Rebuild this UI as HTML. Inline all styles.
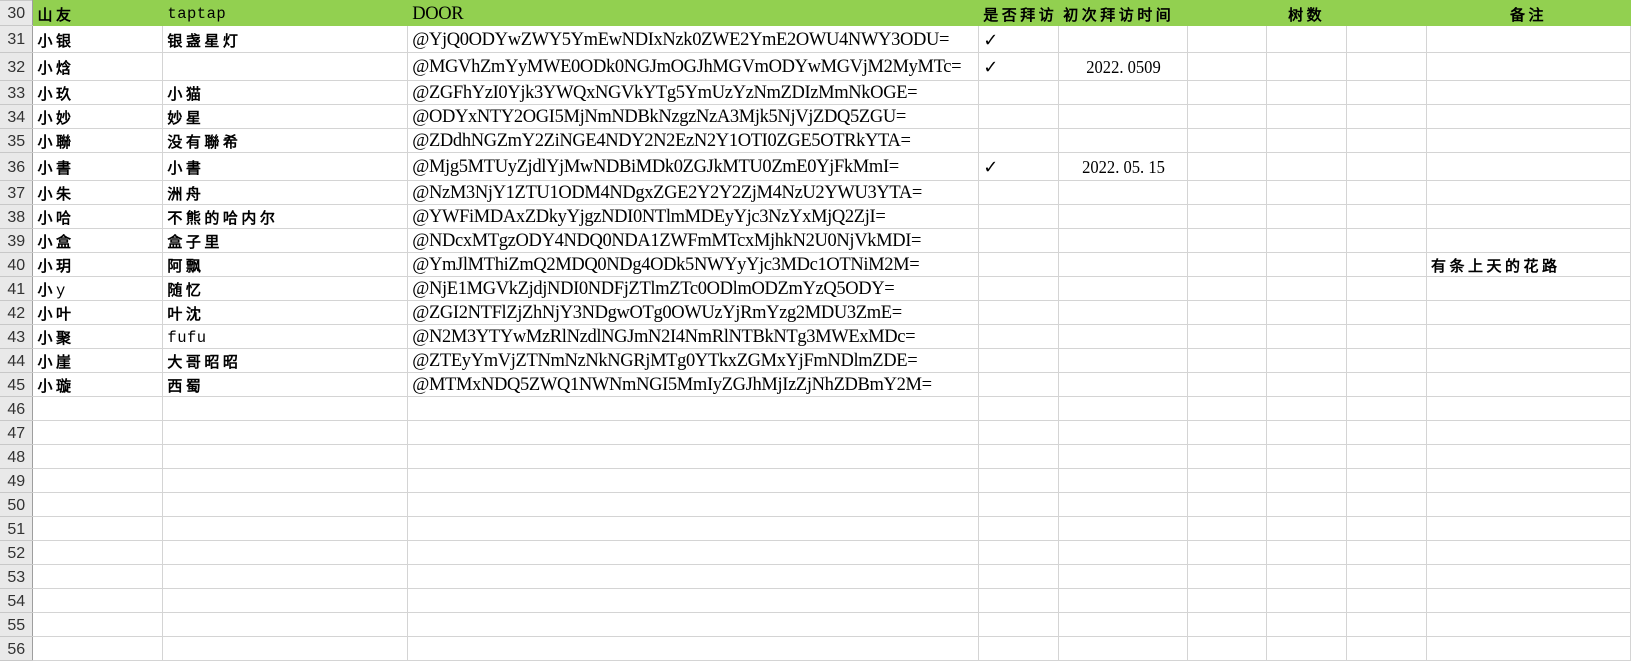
<!DOCTYPE html>
<html><head><meta charset="utf-8"><style>
body{margin:0;width:1631px;height:639px;overflow:hidden;background:#fff;}
table{border-collapse:collapse;table-layout:fixed;position:absolute;left:0;top:0;}
td{border:1px solid #d4d4d4;padding:2px 0 0 4px;white-space:nowrap;overflow:visible;font-family:"Liberation Sans","WenQuanYi Zen Hei",sans-serif;font-size:15px;letter-spacing:3.5px;font-weight:bold;color:#000;vertical-align:middle;box-sizing:border-box;}
td.n{background:#e9e9e9;border-color:#c8c8c8;border-right:1px solid #9e9e9e;font-weight:normal;font-size:16px;letter-spacing:0;color:#333;text-align:center;padding:2px 0 0 0;font-family:"Liberation Sans",sans-serif;}
td.d{font-family:"Liberation Serif",serif;font-weight:normal;font-size:18.5px;letter-spacing:-0.35px;padding-left:4px;}
td.m,span.m{font-family:"Liberation Mono",monospace;font-weight:normal;font-size:15.5px;letter-spacing:0.5px;}
td.c{text-align:center;padding-left:0;}
td.dt{font-family:"Liberation Serif",serif;font-weight:normal;font-size:18px;letter-spacing:0;text-align:center;padding-left:0;transform:scaleX(0.92);}
tr.h td{background:#92d050;border-color:#92d050;}
tr.h td.n{background:#e9e9e9;border-color:#c8c8c8;border-right:1px solid #9e9e9e;}
td.ck{font-family:"DejaVu Sans",sans-serif;font-size:18px;font-weight:bold;letter-spacing:0;}
td:first-child{border-left:none}
</style></head><body>
<table>
<colgroup><col style="width:33px"><col style="width:130px"><col style="width:245px"><col style="width:571px"><col style="width:80px"><col style="width:129px"><col style="width:79px"><col style="width:80px"><col style="width:80px"><col style="width:204px"></colgroup>
<tr class="h" style="height:25px"><td class="n">30</td><td>山友</td><td class="m">taptap</td><td class="d">DOOR</td><td>是否拜访</td><td>初次拜访时间</td><td></td><td class="c">树数</td><td></td><td class="c">备注</td></tr>
<tr style="height:27px"><td class="n">31</td><td>小银</td><td>银盏星灯</td><td class="d">@YjQ0ODYwZWY5YmEwNDIxNzk0ZWE2YmE2OWU4NWY3ODU=</td><td class="ck">✓</td><td></td><td></td><td></td><td></td><td></td></tr>
<tr style="height:28px"><td class="n">32</td><td>小焓</td><td></td><td class="d">@MGVhZmYyMWE0ODk0NGJmOGJhMGVmODYwMGVjM2MyMTc=</td><td class="ck">✓</td><td class="dt">2022. 0509</td><td></td><td></td><td></td><td></td></tr>
<tr style="height:24px"><td class="n">33</td><td>小玖</td><td>小猫</td><td class="d">@ZGFhYzI0Yjk3YWQxNGVkYTg5YmUzYzNmZDIzMmNkOGE=</td><td></td><td></td><td></td><td></td><td></td><td></td></tr>
<tr style="height:24px"><td class="n">34</td><td>小妙</td><td>妙星</td><td class="d">@ODYxNTY2OGI5MjNmNDBkNzgzNzA3Mjk5NjVjZDQ5ZGU=</td><td></td><td></td><td></td><td></td><td></td><td></td></tr>
<tr style="height:24px"><td class="n">35</td><td>小聯</td><td>没有聯希</td><td class="d">@ZDdhNGZmY2ZiNGE4NDY2N2EzN2Y1OTI0ZGE5OTRkYTA=</td><td></td><td></td><td></td><td></td><td></td><td></td></tr>
<tr style="height:28px"><td class="n">36</td><td>小書</td><td>小書</td><td class="d">@Mjg5MTUyZjdlYjMwNDBiMDk0ZGJkMTU0ZmE0YjFkMmI=</td><td class="ck">✓</td><td class="dt">2022. 05. 15</td><td></td><td></td><td></td><td></td></tr>
<tr style="height:24px"><td class="n">37</td><td>小朱</td><td>洲舟</td><td class="d">@NzM3NjY1ZTU1ODM4NDgxZGE2Y2Y2ZjM4NzU2YWU3YTA=</td><td></td><td></td><td></td><td></td><td></td><td></td></tr>
<tr style="height:24px"><td class="n">38</td><td>小哈</td><td>不熊的哈内尔</td><td class="d">@YWFiMDAxZDkyYjgzNDI0NTlmMDEyYjc3NzYxMjQ2ZjI=</td><td></td><td></td><td></td><td></td><td></td><td></td></tr>
<tr style="height:24px"><td class="n">39</td><td>小盒</td><td>盒子里</td><td class="d">@NDcxMTgzODY4NDQ0NDA1ZWFmMTcxMjhkN2U0NjVkMDI=</td><td></td><td></td><td></td><td></td><td></td><td></td></tr>
<tr style="height:24px"><td class="n">40</td><td>小玥</td><td>阿飘</td><td class="d">@YmJlMThiZmQ2MDQ0NDg4ODk5NWYyYjc3MDc1OTNiM2M=</td><td></td><td></td><td></td><td></td><td></td><td>有条上天的花路</td></tr>
<tr style="height:24px"><td class="n">41</td><td>小<span class="m">y</span></td><td>随忆</td><td class="d">@NjE1MGVkZjdjNDI0NDFjZTlmZTc0ODlmODZmYzQ5ODY=</td><td></td><td></td><td></td><td></td><td></td><td></td></tr>
<tr style="height:24px"><td class="n">42</td><td>小叶</td><td>叶沈</td><td class="d">@ZGI2NTFlZjZhNjY3NDgwOTg0OWUzYjRmYzg2MDU3ZmE=</td><td></td><td></td><td></td><td></td><td></td><td></td></tr>
<tr style="height:24px"><td class="n">43</td><td>小聚</td><td class="m">fufu</td><td class="d">@N2M3YTYwMzRlNzdlNGJmN2I4NmRlNTBkNTg3MWExMDc=</td><td></td><td></td><td></td><td></td><td></td><td></td></tr>
<tr style="height:24px"><td class="n">44</td><td>小崖</td><td>大哥昭昭</td><td class="d">@ZTEyYmVjZTNmNzNkNGRjMTg0YTkxZGMxYjFmNDlmZDE=</td><td></td><td></td><td></td><td></td><td></td><td></td></tr>
<tr style="height:24px"><td class="n">45</td><td>小璇</td><td>西蜀</td><td class="d">@MTMxNDQ5ZWQ1NWNmNGI5MmIyZGJhMjIzZjNhZDBmY2M=</td><td></td><td></td><td></td><td></td><td></td><td></td></tr>
<tr style="height:24px"><td class="n">46</td><td></td><td></td><td></td><td></td><td></td><td></td><td></td><td></td><td></td></tr>
<tr style="height:24px"><td class="n">47</td><td></td><td></td><td></td><td></td><td></td><td></td><td></td><td></td><td></td></tr>
<tr style="height:24px"><td class="n">48</td><td></td><td></td><td></td><td></td><td></td><td></td><td></td><td></td><td></td></tr>
<tr style="height:24px"><td class="n">49</td><td></td><td></td><td></td><td></td><td></td><td></td><td></td><td></td><td></td></tr>
<tr style="height:24px"><td class="n">50</td><td></td><td></td><td></td><td></td><td></td><td></td><td></td><td></td><td></td></tr>
<tr style="height:24px"><td class="n">51</td><td></td><td></td><td></td><td></td><td></td><td></td><td></td><td></td><td></td></tr>
<tr style="height:24px"><td class="n">52</td><td></td><td></td><td></td><td></td><td></td><td></td><td></td><td></td><td></td></tr>
<tr style="height:24px"><td class="n">53</td><td></td><td></td><td></td><td></td><td></td><td></td><td></td><td></td><td></td></tr>
<tr style="height:24px"><td class="n">54</td><td></td><td></td><td></td><td></td><td></td><td></td><td></td><td></td><td></td></tr>
<tr style="height:24px"><td class="n">55</td><td></td><td></td><td></td><td></td><td></td><td></td><td></td><td></td><td></td></tr>
<tr style="height:24px"><td class="n">56</td><td></td><td></td><td></td><td></td><td></td><td></td><td></td><td></td><td></td></tr>
</table>
</body></html>
